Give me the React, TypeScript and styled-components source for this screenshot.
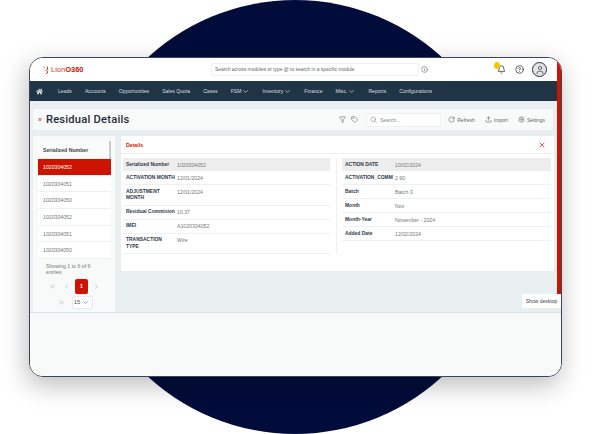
import React from "react";
import styled, { createGlobalStyle } from "styled-components";
import { Bell, ChevronDown, ChevronLeft, ChevronRight, ChevronsLeft, ChevronsRight, CircleHelp, Filter, Info, RotateCw, Search, Settings, Tag, Upload, User, X } from "lucide-react";
import { FaHome } from "react-icons/fa";

const GlobalStyle = createGlobalStyle`
    html, body { margin: 0; background: #fff; }
    * { box-sizing: border-box; }
    body { font-family: "Liberation Sans", Arial, sans-serif; }
`;

const Page = styled.div`
    position: relative;
    width: 592px;
    height: 434px;
    padding: 57px 30px 57px 29px;
    overflow: hidden;
`;

const Circle = styled.div`
    position: absolute;
    left: 78px;
    top: 0;
    width: 434px;
    height: 434px;
    border-radius: 50%;
    background: #020c3a;
`;

const Window = styled.div`
    position: relative;
    display: flex;
    flex-direction: column;
    height: 320px;
    border-radius: 14px;
    background: #f8fafa;
    border: 1px solid #3c4560;
    box-shadow: -2px 8px 26px rgba(0, 0, 0, 0.27);
    overflow: hidden;
`;

const Upper = styled.div`
    display: flex;
    height: 255px;
    border-bottom: 1px solid #d5dfe6;
`;

const Main = styled.div`
    flex: 1;
    min-width: 0;
    display: flex;
    flex-direction: column;
`;

const Rail = styled.div`
    width: 4px;
    background: #e9eef1;
`;

const RedBar = styled.div`
    height: 238px;
    background: #cc1400;
`;

const TopBar = styled.header`
    height: 23px;
    flex: none;
    display: flex;
    align-items: center;
    background: #fff;
    padding-left: 13px;
`;

const Logo = styled.div`
    display: flex;
    align-items: center;
    gap: 2px;
    width: 168px;
    font-size: 7.5px;
    color: #d3402e;
    b { color: #cc1400; }
`;

const GlobalSearch = styled.div`
    width: 208px;
    height: 13px;
    border: 1px solid #eef0f2;
    border-radius: 2px;
    padding-left: 3px;
    font-size: 4.9px;
    line-height: 11px;
    color: #666;
    white-space: nowrap;
`;

const InfoButton = styled.span`
    display: flex;
    margin-left: 2px;
    color: #666;
`;

const TopIcons = styled.div`
    margin-left: auto;
    margin-right: 10px;
    display: flex;
    align-items: center;
    gap: 8.5px;
    color: #333;
`;

const BellWrap = styled.span`
    position: relative;
    display: flex;
`;

const BellBadge = styled.span`
    position: absolute;
    left: -3px;
    top: -3px;
    width: 6px;
    height: 7px;
    border-radius: 50%;
    background: #f2c811;
`;

const Avatar = styled.span`
    width: 15px;
    height: 15px;
    border-radius: 50%;
    border: 1.5px solid #1f3545;
    display: flex;
    align-items: center;
    justify-content: center;
    background: #e3e6e8;
    color: #555;
`;

const Nav = styled.nav`
    height: 20px;
    flex: none;
    display: flex;
    align-items: center;
    gap: 13px;
    padding-left: 6px;
    background: #1f3545;
    color: #d7dde1;
    font-size: 5.1px;
`;

const NavItem = styled.span<{ $first?: boolean }>`
    display: flex;
    align-items: center;
    gap: 1px;
    margin-right: ${(p) => (p.$first ? "2px" : "0")};
    white-space: nowrap;
`;

const Content = styled.main`
    flex: 1;
    min-height: 0;
    display: flex;
    flex-direction: column;
    gap: 6px;
    padding: 8px 4px 0 3px;
    background: #e9eef1;
`;

const TitleBar = styled.div`
    height: 21px;
    flex: none;
    display: flex;
    align-items: center;
    padding-left: 5px;
    background: #f8fafa;
`;

const Chevrons = styled.span`
    color: #cc1400;
    font-size: 7px;
    margin-right: 4px;
`;

const Title = styled.h1`
    margin: 0;
    font-family: Roboto, "Liberation Sans", sans-serif;
    font-size: 11.2px;
    font-weight: 500;
    color: #1f2d3a;
    letter-spacing: 0.2px;
`;

const Tools = styled.div`
    margin-left: auto;
    display: flex;
    align-items: center;
    color: #666;
    font-size: 5px;
    padding-right: 8px;
`;

const ToolIcon = styled.span`
    display: flex;
    margin-right: 5px;
`;

const ToolSearch = styled.div`
    width: 75px;
    height: 14px;
    display: flex;
    align-items: center;
    gap: 3px;
    padding-left: 3px;
    margin-left: 3px;
    background: #fff;
    border: 1px solid #eef0f2;
    border-radius: 2px;
    color: #888;
`;

const ToolButton = styled.span`
    display: flex;
    align-items: center;
    gap: 2px;
    margin-left: 10px;
    ${ToolSearch} + & { margin-left: 7px; }
`;

const Columns = styled.div`
    flex: 1;
    min-height: 0;
    display: flex;
    gap: 6px;
`;

const ListPanel = styled.aside`
    width: 82px;
    flex: none;
    padding: 5px 4px 0 5px;
    background: #f8fafa;
`;

const ListHead = styled.div`
    height: 18px;
    display: flex;
    align-items: center;
    padding-left: 5px;
    font-size: 5.2px;
    font-weight: 700;
    color: #444;
    background: #fafbfb;
    border-right: 2px solid #c8cdd1;
`;

const ListRow = styled.div<{ $active?: boolean }>`
    height: 16.7px;
    display: flex;
    align-items: center;
    padding-left: 5px;
    font-size: 5.2px;
    color: ${(p) => (p.$active ? "#fff" : "#777")};
    background: ${(p) => (p.$active ? "#cc1400" : "#fff")};
    border-bottom: 1px solid #eef1f3;
`;

const Pager = styled.div`
    padding: 4px 0 0 8px;
    font-size: 5.2px;
    line-height: 6.2px;
    color: #777;
`;

const PagerRow = styled.div`
    display: flex;
    align-items: center;
    gap: 5px;
    margin-top: 3px;
    padding-left: 3px;
    color: #aaa;
    svg:first-child { margin-right: 2px; }
`;

const PagerRowTwo = styled(PagerRow)`
    margin-top: 2px;
    padding-left: 12px;
`;

const PageOne = styled.span`
    width: 13px;
    height: 15px;
    display: flex;
    align-items: center;
    justify-content: center;
    border-radius: 2px;
    background: #cc1400;
    color: #fff;
    font-weight: 700;
`;

const PageSize = styled.span`
    width: 21px;
    height: 13px;
    display: flex;
    align-items: center;
    justify-content: center;
    gap: 2px;
    font-size: 6px;
    color: #555;
    background: #fff;
    border: 1px solid #e6eaec;
    border-radius: 2px;
`;

const DetailPanel = styled.section`
    flex: 1;
    align-self: flex-start;
    height: 135px;
    background: #fff;
`;

const DetailHead = styled.div`
    height: 18px;
    display: flex;
    align-items: center;
    justify-content: space-between;
    padding: 0 8px 0 5px;
    border-bottom: 1px solid #e9eef1;
    color: #cc1400;
    font-size: 5.2px;
    font-weight: 700;
`;

const DetailBody = styled.div`
    display: flex;
    padding: 4px 3px 0 2px;
`;

const DetailColumn = styled.div<{ $left?: boolean }>`
    width: ${(p) => (p.$left ? "214px" : "209px")};
    padding-right: ${(p) => (p.$left ? "6px" : "0")};
    margin-left: ${(p) => (p.$left ? "0" : "5px")};
    border-right: ${(p) => (p.$left ? "1px solid #eef1f3" : "none")};
`;

const DetailRow = styled.div<{ $shaded?: boolean; $labelWidth: number }>`
    display: grid;
    grid-template-columns: ${(p) => p.$labelWidth}px 1fr;
    align-items: start;
    padding: 3.5px 3px 3px;
    font-size: 5.2px;
    line-height: 6.5px;
    color: #777;
    background: ${(p) => (p.$shaded ? "#ededed" : "#fff")};
    border-bottom: ${(p) => (p.$shaded ? "none" : "1px solid #eef1f3")};
`;

const DetailLabel = styled.span`
    font-size: 4.95px;
    font-weight: 700;
    color: #2c3a4a;
    white-space: pre;
`;

const Tooltip = styled.div`
    position: absolute;
    right: 0;
    top: 236px;
    width: 39px;
    height: 14px;
    display: flex;
    align-items: center;
    justify-content: center;
    background: #fff;
    font-size: 5px;
    color: #444;
`;

const Footer = styled.div`
    flex: 1;
    background: #f8fafa;
`;

const navItems: [string, boolean][] = [
    ["Leads", false],
    ["Accounts", false],
    ["Opportunities", false],
    ["Sales Quota", false],
    ["Cases", false],
    ["FSM", true],
    ["Inventory", true],
    ["Finance", false],
    ["Misc.", true],
    ["Reports", false],
    ["Configurations", false],
];

const serials = ["1020304052", "1020304051", "1020304050", "1020304052", "1020304051", "1020304050"];

const leftRows = [
    ["Serialized Number", "1020304052"],
    ["ACTIVATION MONTH", "12/01/2024"],
    ["ADJUSTMENT\nMONTH", "12/01/2024"],
    ["Residual Commision", "10.37"],
    ["IMEI", "A1020304052"],
    ["TRANSACTION\nTYPE", "Wire"],
];

const rightRows = [
    ["ACTION DATE", "10/02/2024"],
    ["ACTIVATION_COMM", "2.90"],
    ["Batch", "Batch 3"],
    ["Month", "Nov"],
    ["Month-Year", "November - 2024"],
    ["Added Date", "12/02/2024"],
];

const LogoMark = () => (
    <svg width="6" height="8" viewBox="0 0 6 8" fill="none" stroke="#cc1400" strokeWidth="0.8">
        <path d="M0.5 0.8 L1.5 1.4" />
        <path d="M4.5 0.5 V3.5 L2.5 4.5" />
        <path d="M4.5 5 V7 L3 7.6" />
    </svg>
);

export default function App() {
    return (
        <Page>
            <GlobalStyle />
            <Circle />
            <Window>
                <Upper>
                    <Main>
                        <TopBar>
                            <Logo>
                                <LogoMark />
                                <span>Lion<b>O360</b></span>
                            </Logo>
                            <GlobalSearch>Search across modules or type @ to search in a specific module</GlobalSearch>
                            <InfoButton><Info size={7} /></InfoButton>
                            <TopIcons>
                                <BellWrap>
                                    <Bell size={9} />
                                    <BellBadge />
                                </BellWrap>
                                <CircleHelp size={9} />
                                <Avatar><User size={10} /></Avatar>
                            </TopIcons>
                        </TopBar>
                        <Nav>
                            <NavItem $first><FaHome size={7} /></NavItem>
                            {navItems.map(([label, hasMenu]) => (
                                <NavItem key={label}>
                                    {label}
                                    {hasMenu && <ChevronDown size={7} strokeWidth={2.5} />}
                                </NavItem>
                            ))}
                        </Nav>
                        <Content>
                            <TitleBar>
                                <Chevrons>»</Chevrons>
                                <Title>Residual Details</Title>
                                <Tools>
                                    <ToolIcon><Filter size={7} /></ToolIcon>
                                    <ToolIcon><Tag size={7} /></ToolIcon>
                                    <ToolSearch><Search size={7} />Search...</ToolSearch>
                                    <ToolButton><RotateCw size={7} />Refresh</ToolButton>
                                    <ToolButton><Upload size={7} />Import</ToolButton>
                                    <ToolButton><Settings size={7} />Settings</ToolButton>
                                </Tools>
                            </TitleBar>
                            <Columns>
                                <ListPanel>
                                    <ListHead>Serialized Number</ListHead>
                                    {serials.map((serial, i) => (
                                        <ListRow key={i} $active={i === 0}>{serial}</ListRow>
                                    ))}
                                    <Pager>
                                        Showing 1 to 6 of 6<br />entries
                                        <PagerRow>
                                            <ChevronsLeft size={7} />
                                            <ChevronLeft size={7} />
                                            <PageOne>1</PageOne>
                                            <ChevronRight size={7} />
                                        </PagerRow>
                                        <PagerRowTwo>
                                            <ChevronsRight size={7} />
                                            <PageSize>15<ChevronDown size={7} /></PageSize>
                                        </PagerRowTwo>
                                    </Pager>
                                </ListPanel>
                                <DetailPanel>
                                    <DetailHead>
                                        Details
                                        <X size={8} strokeWidth={2} />
                                    </DetailHead>
                                    <DetailBody>
                                        <DetailColumn $left>
                                            {leftRows.map(([label, value], i) => (
                                                <DetailRow key={label} $shaded={i === 0} $labelWidth={51}>
                                                    <DetailLabel>{label}</DetailLabel>
                                                    <span>{value}</span>
                                                </DetailRow>
                                            ))}
                                        </DetailColumn>
                                        <DetailColumn>
                                            {rightRows.map(([label, value], i) => (
                                                <DetailRow key={label} $shaded={i === 0} $labelWidth={50}>
                                                    <DetailLabel>{label}</DetailLabel>
                                                    <span>{value}</span>
                                                </DetailRow>
                                            ))}
                                        </DetailColumn>
                                    </DetailBody>
                                </DetailPanel>
                            </Columns>
                        </Content>
                    </Main>
                    <Rail><RedBar /></Rail>
                </Upper>
                <Footer />
                <Tooltip>Show desktop</Tooltip>
            </Window>
        </Page>
    );
}
